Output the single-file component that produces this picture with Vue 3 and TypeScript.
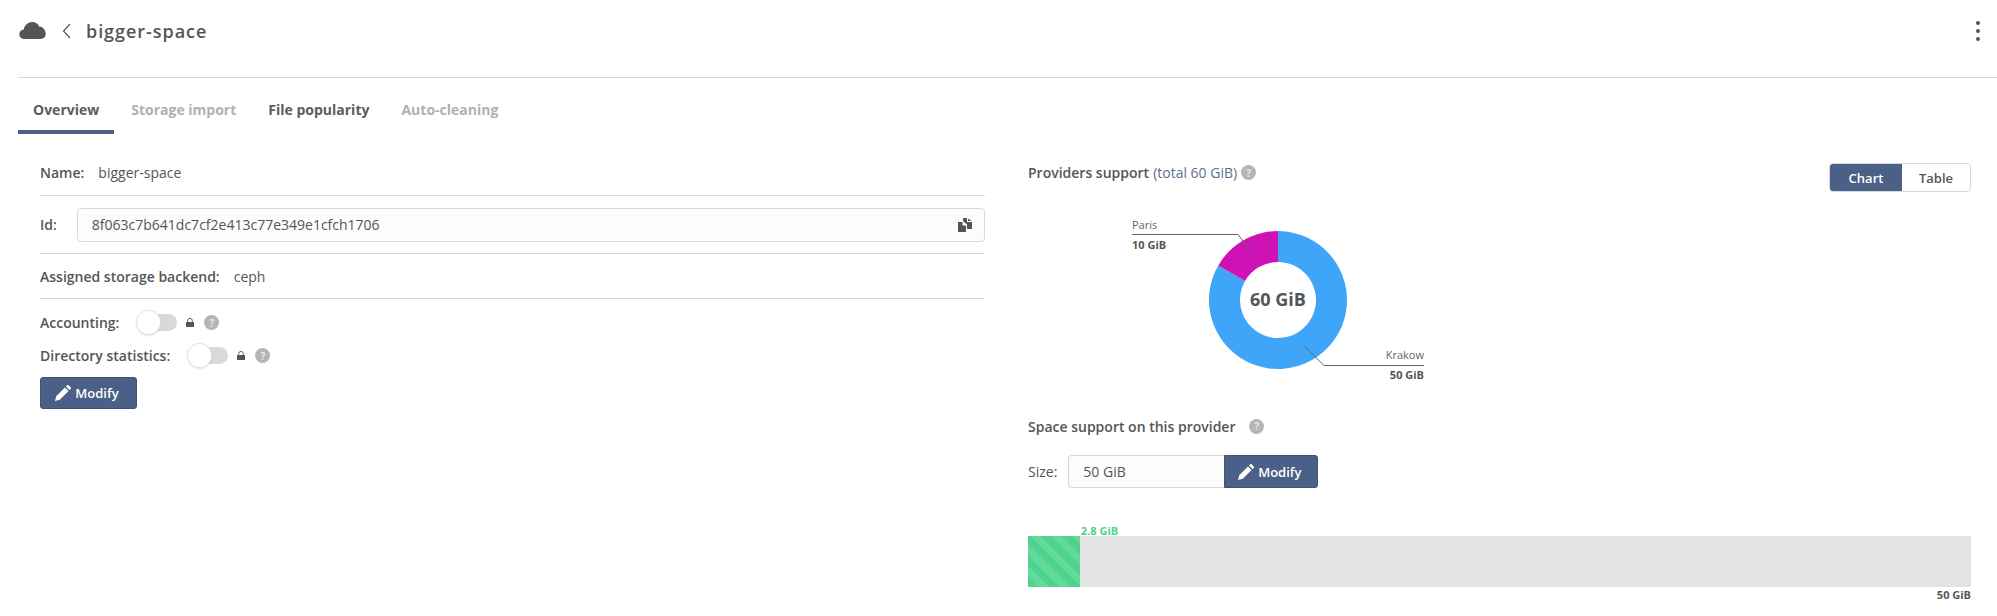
<script setup lang="ts">
import { computed } from "vue";

const tabs = [
  { label: "Overview", active: true },
  { label: "Storage import", disabled: true },
  { label: "File popularity" },
  { label: "Auto-cleaning", disabled: true },
];

const toggles = ["Accounting:", "Directory statistics:"];

const cx = 250;
const cy = 102;
const outer = 69;
const inner = 38;

function arc(from: number, to: number) {
  const pt = (r: number, a: number) =>
    `${(cx + r * Math.sin(a)).toFixed(2)} ${(cy - r * Math.cos(a)).toFixed(2)}`;
  const large = to - from > Math.PI ? 1 : 0;
  return `M${pt(outer, from)}A${outer} ${outer} 0 ${large} 1 ${pt(outer, to)}L${pt(inner, to)}A${inner} ${inner} 0 ${large} 0 ${pt(inner, from)}Z`;
}

const krakow = computed(() => arc(0, (50 / 60) * 2 * Math.PI));
const paris = computed(() => arc((50 / 60) * 2 * Math.PI, 2 * Math.PI));
</script>

<template>
  <div class="page">
    <header class="header">
      <svg class="cloud" viewBox="0 0 28 18" width="27" height="17">
        <path d="M5.500 18C2.400 18 0 15.900 0 13 0 10.300 2 8.300 4.700 8 5.500 3.400 9.200 0 13.600 0c3.400 0 6.300 2 7.700 5 .9-.2 3.300-.1 3.900 1.700C27 8 28 10.300 28 12.800c0 3-2.400 5.200-5.500 5.200z" fill="#555" />
      </svg>
      <svg class="back" viewBox="0 0 9 16" width="9" height="16">
        <path d="M8 1 1.500 8 8 15" fill="none" stroke="#555" stroke-width="1.200" />
      </svg>
      <h1 class="title">bigger-space</h1>
      <div class="dots"><i></i><i></i><i></i></div>
    </header>

    <nav class="tabs">
      <a v-for="tab in tabs" :key="tab.label" class="tab" :class="{ active: tab.active, disabled: tab.disabled }">
        {{ tab.label }}
      </a>
    </nav>

    <main class="content">
      <section class="left">
        <div class="row name-row">
          <b>Name:</b>
          <span>bigger-space</span>
        </div>
        <div class="row id-row">
          <b>Id:</b>
          <div class="id-input">
            <span>8f063c7b641dc7cf2e413c77e349e1cfch1706</span>
            <svg viewBox="0 0 14 14" width="14" height="14">
              <path d="M0 4h4.500v3.500H8V14H0z" fill="#555" />
              <path d="M5 0h4v4h5v7H9V6.500L5 3z" fill="#555" />
              <path d="M10 .5 13.500 3H10z" fill="#555" />
            </svg>
          </div>
        </div>
        <div class="row backend-row">
          <b>Assigned storage backend:</b>
          <span>ceph</span>
        </div>
        <div class="toggles">
          <div v-for="label in toggles" :key="label" class="toggle-row">
            <b>{{ label }}</b>
            <span class="switch"><i></i></span>
            <svg class="lock" viewBox="0 0 8 9" width="8" height="9">
              <path d="M1.700 4V2.700a2.300 2.300 0 0 1 4.600 0V4" fill="none" stroke="#666" stroke-width="1" />
              <rect y="4" width="8" height="5" rx=".6" fill="#555" />
            </svg>
            <span class="help">?</span>
          </div>
        </div>
        <button class="btn left-btn">
          <svg viewBox="0 0 16 16" width="16" height="16">
            <path d="M0 16 1.200 11.200 10 2.400 13.600 6 4.800 14.800zM11 1.400 12.200.2a1 1 0 0 1 1.300 0l2.300 2.300a1 1 0 0 1 0 1.300L14.600 5z" fill="#fff" />
          </svg>
          Modify
        </button>
      </section>

      <section class="right">
        <div class="providers-head">
          <div class="providers-title">
            <b>Providers support</b>
            <span class="total">(total 60 GiB)</span>
            <span class="help">?</span>
          </div>
          <div class="view-switch">
            <span class="on">Chart</span>
            <span>Table</span>
          </div>
        </div>

        <svg class="donut" viewBox="0 0 943 216" width="943" height="216">
          <path :d="krakow" fill="#3fa5f9" />
          <path :d="paris" fill="#cf12b5" />
          <text :x="cx" :y="cy + 6" text-anchor="middle" class="center-text">60 GiB</text>
          <path d="M104 36.500H210L224 55" fill="none" stroke="#666" stroke-width="1" />
          <path d="M276 147.500 296 167.500H396" fill="none" stroke="#666" stroke-width="1" />
          <text x="104" y="31" class="pie-name">Paris</text>
          <text x="104" y="51" class="pie-value">10 GiB</text>
          <text x="396" y="161" text-anchor="end" class="pie-name">Krakow</text>
          <text x="396" y="181" text-anchor="end" class="pie-value">50 GiB</text>
        </svg>

        <div class="support-title">
          <b>Space support on this provider</b>
          <span class="help">?</span>
        </div>

        <div class="size-row">
          <span>Size:</span>
          <div class="size-input">50 GiB</div>
          <button class="btn size-btn">
            <svg viewBox="0 0 16 16" width="16" height="16">
              <path d="M0 16 1.200 11.200 10 2.400 13.600 6 4.800 14.800zM11 1.400 12.200.2a1 1 0 0 1 1.300 0l2.300 2.300a1 1 0 0 1 0 1.300L14.600 5z" fill="#fff" />
            </svg>
            Modify
          </button>
        </div>

        <div class="bar-wrap">
          <div class="used-label" :style="{ left: '5.5%' }">2.8 GiB</div>
          <div class="bar">
            <div class="used" :style="{ width: '5.5%' }"></div>
          </div>
          <div class="total-label">50 GiB</div>
        </div>
      </section>
    </main>
  </div>
</template>

<style>
html,
body {
  margin: 0;
  background: #fff;
}
</style>

<style scoped>
.page {
  width: 1997px;
  height: 616px;
  overflow: hidden;
  font-family: "Open Sans", sans-serif;
  font-size: 14px;
  color: #555;
  box-sizing: border-box;
  padding-left: 18px;
}

b {
  font-weight: 600;
}

.header {
  display: flex;
  align-items: center;
  height: 61px;
  border-bottom: 1px solid #d9d9d9;
  padding-bottom: 16px;
}

.cloud {
  margin-left: 1px;
}

.back {
  margin-left: 16px;
}

.title {
  margin: 0 0 0 15px;
  font-size: 18px;
  font-weight: 600;
  letter-spacing: 0.95px;
}

.dots {
  margin-left: auto;
  margin-right: 17px;
  display: flex;
  flex-direction: column;
  gap: 4px;
}

.dots i {
  width: 4px;
  height: 4px;
  border-radius: 50%;
  background: #555;
}

.tabs {
  display: flex;
  height: 56px;
}

.tab {
  padding: 0 15px;
  margin-right: 2px;
  height: 56px;
  line-height: 64px;
  box-sizing: border-box;
  font-weight: 700;
  font-size: 14px;
  color: #5c5c5c;
}

.tab.active {
  border-bottom: 4px solid #4a6086;
}

.tab.disabled {
  color: #b0b0b0;
}

.content {
  display: flex;
  padding-left: 22px;
}

.left {
  width: 945px;
}

.row {
  display: flex;
  align-items: center;
  border-bottom: 1px solid #d9d9d9;
}

.row b {
  margin-right: 14px;
}

.name-row {
  height: 62px;
  padding-top: 15px;
  padding-bottom: 0;
  box-sizing: border-box;
}

.id-row {
  height: 57px;
}

.id-row b {
  margin-right: 20px;
}

.id-input {
  flex: 1;
  height: 34px;
  border: 1px solid #d9d9d9;
  border-radius: 4px;
  background: #fcfcfc;
  box-sizing: border-box;
  display: flex;
  align-items: center;
  justify-content: space-between;
  padding: 0 12px 0 14px;
}

.backend-row {
  height: 44px;
}

.toggles {
  margin-top: 7px;
}

.toggle-row {
  display: flex;
  align-items: center;
  height: 33px;
}

.switch {
  position: relative;
  width: 40px;
  height: 17px;
  border-radius: 9px;
  background: #d9d9d9;
  margin-left: 18px;
}

.switch i {
  position: absolute;
  left: 0;
  top: -3px;
  width: 23px;
  height: 23px;
  border-radius: 50%;
  background: #fff;
  box-shadow: 0 0 0 1px #e2e2e2, 0 1px 3px rgba(0, 0, 0, 0.2);
}

.lock {
  margin-left: 9px;
}

.help {
  display: inline-flex;
  align-items: center;
  justify-content: center;
  width: 15px;
  height: 15px;
  border-radius: 50%;
  background: #b5b5b5;
  color: #e8e8e8;
  font-size: 10px;
  font-weight: 700;
  margin-left: 10px;
}

.btn {
  display: inline-flex;
  align-items: center;
  justify-content: center;
  gap: 4px;
  border: 1px solid #3f5272;
  border-radius: 3px;
  background: #4a6086;
  color: #fff;
  font-family: inherit;
  font-size: 13px;
  font-weight: 600;
  padding: 0 3px 0 0;
}

.left-btn {
  width: 97px;
  height: 32px;
  margin-top: 5px;
}

.right {
  width: 943px;
  margin-left: 43px;
}

.providers-head {
  display: flex;
  align-items: flex-start;
  justify-content: space-between;
  padding-top: 29px;
  height: 36px;
}

.providers-title {
  display: flex;
  align-items: center;
}

.providers-title .help {
  margin-left: 4px;
}

.total {
  color: #5b6f8c;
  margin-left: 4px;
}

.view-switch {
  display: flex;
  height: 29px;
  width: 142px;
  border: 1px solid #d9d9d9;
  border-radius: 4px;
  box-sizing: border-box;
  overflow: hidden;
  font-weight: 600;
  font-size: 13px;
}

.view-switch span {
  flex: 1;
  display: flex;
  align-items: center;
  justify-content: center;
}

.view-switch .on {
  flex: 0 0 72px;
  background: #4a6086;
  color: #fff;
}

.donut {
  display: block;
  margin-top: -1px;
}

.center-text {
  font-size: 18px;
  font-weight: 700;
  fill: #555;
}

.pie-name {
  font-size: 11px;
  fill: #666;
}

.pie-value {
  font-size: 11px;
  font-weight: 700;
  fill: #555;
}

.support-title {
  display: flex;
  align-items: center;
  height: 24px;
}

.support-title .help {
  margin-left: 14px;
}

.size-row {
  display: flex;
  align-items: center;
  margin-top: 17px;
}

.size-input {
  width: 156px;
  height: 33px;
  margin-left: 11px;
  border: 1px solid #d9d9d9;
  border-right: 0;
  border-radius: 4px 0 0 4px;
  background: #fcfcfc;
  box-sizing: border-box;
  display: flex;
  align-items: center;
  padding-left: 14px;
}

.size-btn {
  width: 94px;
  height: 33px;
  border-radius: 0 3px 3px 0;
}

.bar-wrap {
  position: relative;
  margin-top: 48px;
}

.bar {
  height: 51px;
  background: #e3e3e3;
}

.used {
  height: 100%;
  background: repeating-linear-gradient(45deg, #4dd38c 0 7.500px, #62da9c 7.500px 15px);
}

.used-label {
  position: absolute;
  top: -13px;
  font-size: 11px;
  font-weight: 700;
  color: #4dd38c;
  line-height: 15px;
  padding-left: 1px;
}

.total-label {
  text-align: right;
  font-size: 11px;
  font-weight: 700;
  line-height: 16px;
}
</style>
